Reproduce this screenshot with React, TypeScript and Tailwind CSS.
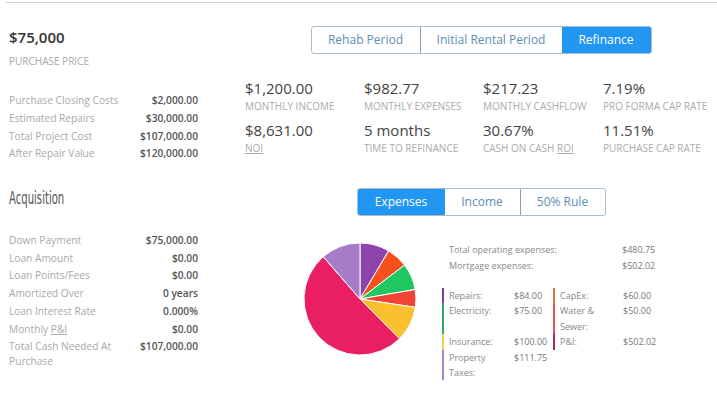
import React from "react";

const font = { fontFamily: '"Open Sans", "Noto Sans", sans-serif' };

function Row({ label, value }: { label: React.ReactNode; value: string }) {
  return (
    <div className="flex justify-between items-start py-[1.35px] leading-[15px] text-[10.2px]">
      <span className="text-[#a9a9a9] w-[130px]">{label}</span>
      <span className="text-[#555] font-semibold whitespace-nowrap">{value}</span>
    </div>
  );
}

const slices = [
  { v: 84, c: "#8e44ad" },
  { v: 60, c: "#f4511e" },
  { v: 75, c: "#1ec760" },
  { v: 50, c: "#f44336" },
  { v: 100, c: "#fbc02d" },
  { v: 502.02, c: "#e91e63" },
  { v: 111.75, c: "#a67cc8" },
];

function Pie() {
  const total = slices.reduce((a, s) => a + s.v, 0);
  const cx = 57, cy = 57, r = 56;
  let a0 = -Math.PI / 2;
  return (
    <svg width="114" height="114" viewBox="0 0 114 114">
      {slices.map((s, i) => {
        const a1 = a0 + (s.v / total) * Math.PI * 2;
        const x0 = cx + r * Math.cos(a0), y0 = cy + r * Math.sin(a0);
        const x1 = cx + r * Math.cos(a1), y1 = cy + r * Math.sin(a1);
        const large = a1 - a0 > Math.PI ? 1 : 0;
        const d = `M${cx},${cy} L${x0},${y0} A${r},${r} 0 ${large} 1 ${x1},${y1} Z`;
        a0 = a1;
        return <path key={i} d={d} fill={s.c} stroke="#fff" strokeWidth="1" />;
      })}
    </svg>
  );
}

function Stat({ value, label }: { value: string; label: React.ReactNode }) {
  return (
    <div>
      <div className="text-[15px] leading-[20px] text-[#444] font-medium">{value}</div>
      <div className="mt-[1.5px] text-[10px] leading-[12px] text-[#ababab] uppercase whitespace-nowrap">{label}</div>
    </div>
  );
}

function LegendCell({ color, label, value, w }: { color: string; label: React.ReactNode; value: string; w: string }) {
  return (
    <div className="flex self-stretch">
      <div className="w-[2px]" style={{ backgroundColor: color }} />
      <div className="flex pl-[5px]">
        <span className={w + " text-[#888]"}>{label}</span>
        <span className="text-[#777]">{value}</span>
      </div>
    </div>
  );
}

export default function App() {
  return (
    <div className="w-[717px] h-[398px] bg-white overflow-hidden" style={font}>
      <div className="mt-[2px] ml-[6px] h-px bg-[#d4d4d4]" />
      <div className="flex">
        {/* Left column */}
        <div className="ml-[9px] w-[189px]">
          <div className="mt-[24px] text-[15px] leading-[20px] font-semibold text-[#333]">$75,000</div>
          <div className="mt-[8px] text-[10px] leading-[12px] text-[#a9a9a9]">PURCHASE PRICE</div>
          <div className="mt-[25px]">
            <Row label="Purchase Closing Costs" value="$2,000.00" />
            <Row label="Estimated Repairs" value="$30,000.00" />
            <Row label="Total Project Cost" value="$107,000.00" />
            <Row label="After Repair Value" value="$120,000.00" />
          </div>
          <div
            className="mt-[24px] text-[17px] leading-[22px] text-[#555] origin-left scale-x-[0.66] whitespace-nowrap"
            style={{ fontFamily: '"Liberation Sans Narrow", "DejaVu Sans Condensed", "Liberation Sans", sans-serif' }}
          >
            Acquisition
          </div>
          <div className="mt-[23px]">
            <Row label="Down Payment" value="$75,000.00" />
            <Row label="Loan Amount" value="$0.00" />
            <Row label="Loan Points/Fees" value="$0.00" />
            <Row label="Amortized Over" value="0 years" />
            <Row label="Loan Interest Rate" value="0.000%" />
            <Row label={<>Monthly <span className="underline">P&amp;I</span></>} value="$0.00" />
            <Row label="Total Cash Needed At Purchase" value="$107,000.00" />
          </div>
        </div>

        {/* Right column */}
        <div className="ml-[47px] w-[472px]">
          <div className="mt-[23px] flex justify-center">
            <div className="flex h-[28px] rounded-[3px] border border-[#a9bccb] text-[12px] overflow-hidden">
              <div className="w-[109px] flex items-center justify-center text-[#5d8db5] border-r border-[#8a9fae]">Rehab Period</div>
              <div className="w-[141px] flex items-center justify-center text-[#5d8db5]">Initial Rental Period</div>
              <div className="w-[89px] flex items-center justify-center bg-[#2196f3] text-white">Refinance</div>
            </div>
          </div>

          <div className="mt-[24px] grid grid-cols-[119px_119px_120px_114px]">
            <Stat value="$1,200.00" label="Monthly Income" />
            <Stat value="$982.77" label="Monthly Expenses" />
            <Stat value="$217.23" label="Monthly Cashflow" />
            <Stat value="7.19%" label="Pro Forma Cap Rate" />
          </div>
          <div className="mt-[8.5px] grid grid-cols-[119px_119px_120px_114px]">
            <Stat value="$8,631.00" label={<span className="underline">NOI</span>} />
            <Stat value="5 months" label="Time to Refinance" />
            <Stat value="30.67%" label={<>Cash on Cash <span className="underline">ROI</span></>} />
            <Stat value="11.51%" label="Purchase Cap Rate" />
          </div>

          <div className="mt-[34px] flex justify-center">
            <div className="flex h-[28px] rounded-[3px] border border-[#a9bccb] text-[12px] overflow-hidden">
              <div className="w-[87px] flex items-center justify-center bg-[#2196f3] text-white">Expenses</div>
              <div className="w-[76px] flex items-center justify-center text-[#5d8db5] border-r border-[#8a9fae]">Income</div>
              <div className="w-[84px] flex items-center justify-center text-[#5d8db5]">50% Rule</div>
            </div>
          </div>

          <div className="mt-[26px] flex">
            <div className="ml-[58px]">
              <Pie />
            </div>
            <div className="ml-[25px] text-[9px]">
              <div className="pl-[7px] leading-[16px] mt-[0.5px]">
                <div className="flex"><span className="w-[173px] text-[#888]">Total operating expenses:</span><span className="text-[#777]">$480.75</span></div>
                <div className="flex"><span className="w-[173px] text-[#888]">Mortgage expenses:</span><span className="text-[#777]">$502.02</span></div>
              </div>
              <div className="mt-[14px] grid grid-cols-[111px_110px] leading-[15.4px] items-start">
                <LegendCell color="#7e3fa0" label="Repairs:" value="$84.00" w="w-[65px]" />
                <LegendCell color="#d9774a" label="CapEx:" value="$60.00" w="w-[63px]" />
                <LegendCell color="#37a96a" label="Electricity:" value="$75.00" w="w-[65px]" />
                <LegendCell color="#e4505a" label={<span className="block w-[48px]">Water &amp; Sewer:</span>} value="$50.00" w="w-[63px]" />
                <LegendCell color="#f2d05e" label="Insurance:" value="$100.00" w="w-[65px]" />
                <div className="flex self-start">
                  <div className="w-[2px] bg-[#b0286a]" />
                  <div className="flex pl-[5px]">
                    <span className="w-[63px] text-[#888]">P&amp;I:</span>
                    <span className="text-[#777]">$502.02</span>
                  </div>
                </div>
                <LegendCell color="#a584c8" label={<span className="block w-[50px]">Property Taxes:</span>} value="$111.75" w="w-[65px]" />
              </div>
            </div>
          </div>
        </div>
      </div>
    </div>
  );
}
